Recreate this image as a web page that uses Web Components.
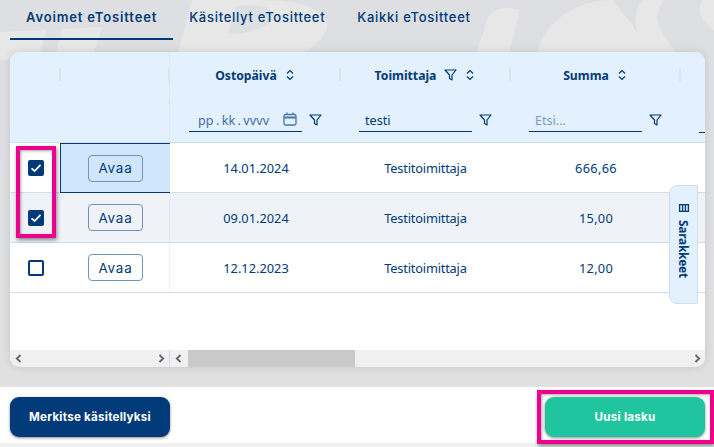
<!DOCTYPE html>
<html lang="fi">
<head>
<meta charset="utf-8">
<title>eTositteet</title>
<style>
  html, body { margin: 0; height: 100%; }
  body {
    width: 714px;
    height: 447px;
    overflow: hidden;
    position: relative;
    background: #f0f0f0;
    font-family: "Noto Sans", sans-serif;
    color: #003a78;
  }
</style>
</head>
<body>
<etosite-view>
  <etosite-tabs slot="tabs">
    <etosite-tab active>Avoimet eTositteet</etosite-tab>
    <etosite-tab>Käsitellyt eTositteet</etosite-tab>
    <etosite-tab>Kaikki eTositteet</etosite-tab>
  </etosite-tabs>
  <etosite-grid slot="grid"></etosite-grid>
  <etosite-button slot="actions">Merkitse käsitellyksi</etosite-button>
  <etosite-button slot="actions" kind="green">Uusi lasku</etosite-button>
</etosite-view>

<script>
const ICONS = {
  sort: `<svg width="10" height="12" viewBox="0 0 10 12" fill="none" stroke="currentColor" stroke-width="1.2"><path d="M2 4.5 5 1.5 8 4.5M2 7.5 5 10.5 8 7.5"/></svg>`,
  filter: `<svg width="13" height="12" viewBox="0 0 13 12" fill="none" stroke="currentColor" stroke-width="1.2" stroke-linejoin="round"><path d="M1 1h11L8 6v5L5.5 9.5V6z"/></svg>`,
  calendar: `<svg class="cal" width="14" height="14" viewBox="0 0 14 14" fill="none" stroke="#4a76a8" stroke-width="1.3"><rect x="1" y="2.5" width="12" height="10.5" rx="1.5"/><path d="M1 5.5h12" stroke-width="2"/><path d="M4 .5v2.5M10 .5v2.5"/></svg>`,
  columns: `<svg width="10" height="8" viewBox="0 0 10 8" fill="none" stroke="currentColor" stroke-width="1.3"><rect x=".65" y=".65" width="8.7" height="6.7"/><path d="M3.6.6v6.8M6.4.6v6.8"/></svg>`,
  left: `<svg width="7" height="9" viewBox="0 0 7 9" fill="none" stroke="#666" stroke-width="1.8"><path d="M5.5 1 1.8 4.5 5.5 8"/></svg>`,
  right: `<svg width="7" height="9" viewBox="0 0 7 9" fill="none" stroke="#666" stroke-width="1.8"><path d="M1.5 1 5.2 4.5 1.5 8"/></svg>`
};

class EtositeView extends HTMLElement {
  constructor() {
    super();
    this.attachShadow({ mode: 'open' });
    this.shadowRoot.innerHTML = `
      <style>
        :host { display: flex; flex-direction: column; width: 714px; height: 447px; position: relative; }
        .main { height: 387px; box-sizing: border-box; padding: 0 9px 0 10px; position: relative; overflow: hidden;
          background: linear-gradient(#dedfe3 0, #dedfe3 50px, #e0e0e0 100%); }
        .mark { position: absolute; left: 0; top: 0; }
        .content { position: relative; }
        .footer { height: 56px; background: #fff; box-sizing: border-box; padding: 10px 9px 6px 10px;
          display: flex; justify-content: space-between; }
        .rest { flex: 1; background: #f0f0f0; }
        .pink { position: absolute; border: 4px solid #ec008c; box-sizing: border-box;
          box-shadow: 1px 2px 4px rgba(0,0,0,.45), inset 1px 1px 3px rgba(0,0,0,.35); pointer-events: none; }
        .p1 { left: 16px; top: 146px; width: 40px; height: 92px; }
        .p2 { left: 537px; top: 390px; width: 177px; height: 54px; }
      </style>
      <div class="main">
        <svg class="mark" width="714" height="60" viewBox="0 0 714 60" fill="#e7e7e8">
          <path d="M0 32 46 30 38 60H0zM62 29 102 27 92 60H54z"/>
          <path d="M192 0H262C322 0 340 22 318 42L296 60H176zM236 6 228 34C256 34 276 24 272 12 270 6 254 4 236 6z"/>
          <path d="M474 60 488 18C492 8 508 6 520 10L508 60z"/>
          <path d="M536 60C540 24 574 0 612 0L632 24 650 60zM556 58C558 36 572 16 582 20 586 30 578 52 566 58z"/>
          <path d="M642 0H664C650 18 660 32 682 60H652C630 34 634 12 642 0zM702 0H714V30C702 22 696 10 702 0z"/>
        </svg>
        <div class="content">
          <slot name="tabs"></slot>
          <slot name="grid"></slot>
        </div>
      </div>
      <div class="footer"><slot name="actions"></slot></div>
      <div class="rest"></div>
      <div class="pink p1"></div>
      <div class="pink p2"></div>
    `;
  }
}

class EtositeTabs extends HTMLElement {
  constructor() {
    super();
    this.attachShadow({ mode: 'open' });
    this.shadowRoot.innerHTML = `
      <style>:host { display: flex; height: 40px; margin-bottom: 12px; }</style>
      <slot></slot>`;
  }
}

class EtositeTab extends HTMLElement {
  constructor() {
    super();
    this.attachShadow({ mode: 'open' });
    this.shadowRoot.innerHTML = `
      <style>
        :host { display: block; box-sizing: border-box; height: 40px; padding: 9px 16px 0;
          font: 500 13px/16px Inter, sans-serif; letter-spacing: .72px; color: #003a78; white-space: nowrap; }
        :host([active]) { border-bottom: 2px solid #003a78; font-weight: 600; letter-spacing: .85px; }
      </style>
      <slot></slot>`;
  }
}

class EtositeButton extends HTMLElement {
  constructor() {
    super();
    this.attachShadow({ mode: 'open' });
    this.shadowRoot.innerHTML = `
      <style>
        :host { display: flex; align-items: center; justify-content: center; width: 160px; height: 40px;
          border-radius: 9px; background: #003a78; color: #fff; font: 700 11.6px Inter, sans-serif;
          letter-spacing: .25px; box-shadow: 0 1px 3px rgba(0,0,0,.45); }
        :host([kind="green"]) { background: #20c5a0; }
      </style>
      <slot></slot>`;
  }
}

class EtositeHeadCell extends HTMLElement {
  constructor() {
    super();
    this.attachShadow({ mode: 'open' });
    this.shadowRoot.innerHTML = `
      <style>
        :host { display: flex; align-items: center; justify-content: center; gap: 8px; position: relative; height: 50px;
          font: 700 12.2px "Noto Sans", sans-serif; color: #003a78; white-space: nowrap; box-sizing: border-box; padding-bottom: 4px; }
        :host::after { content: ""; position: absolute; right: -1px; top: 16px; width: 2px; height: 13px; background: #d9e4ee; }
        svg { display: block; }
      </style>
      <slot></slot>`;
  }
}

class EtositeFilterCell extends HTMLElement {
  constructor() {
    super();
    this.attachShadow({ mode: 'open' });
    this.shadowRoot.innerHTML = `
      <style>
        :host { display: flex; align-items: flex-start; height: 40px; box-sizing: border-box; padding: 0 0 0 19px; }
        .field { width: 113px; height: 30px; box-sizing: border-box; border-bottom: 1px solid #003a78;
          display: flex; align-items: center; justify-content: space-between; padding: 7px 5px 0 6px;
          font: 400 12.6px "Noto Sans", sans-serif; color: #003a78; }
        .icon { margin: 7px 0 0 7px; color: #003a78; }
      </style>
      <div class="field"><slot></slot></div>
      <div class="icon">${ICONS.filter}</div>`;
  }
}

class EtositeCheck extends HTMLElement {
  constructor() {
    super();
    this.attachShadow({ mode: 'open' });
    this.shadowRoot.innerHTML = `
      <style>
        :host { display: block; width: 16px; height: 16px; box-sizing: border-box; border: 2px solid #003a78;
          border-radius: 2px; background: #fff; }
        :host([checked]) { background: #003a78; }
        svg { display: none; }
        :host([checked]) svg { display: block; margin: 0; }
      </style>
      <svg width="12" height="12" viewBox="0 0 12 12" fill="none" stroke="#fff" stroke-width="1.7"><path d="M1.5 6.3 4.6 9 10.5 2.8"/></svg>`;
  }
}

class EtositeOpen extends HTMLElement {
  constructor() {
    super();
    this.attachShadow({ mode: 'open' });
    this.shadowRoot.innerHTML = `
      <style>
        :host { display: flex; align-items: center; justify-content: center; box-sizing: border-box; width: 55px; height: 27px;
          border: 1px solid #6e94bf; border-radius: 4px; font: 400 13.4px Inter, sans-serif; letter-spacing: .85px; color: #003a78; }
      </style>
      <slot></slot>`;
  }
}

class EtositeRow extends HTMLElement {
  constructor() {
    super();
    this.attachShadow({ mode: 'open' });
  }
  connectedCallback() {
    const checked = this.hasAttribute('checked') ? 'checked' : '';
    this.shadowRoot.innerHTML = `
      <style>
        :host { display: grid; grid-template-columns: 50px 110px 170px 170px 170px 25px; height: 50px; box-sizing: border-box;
          border-bottom: 1px solid #cfdeee; background: #fff; font: 400 12.8px "Noto Sans", sans-serif; color: #003a78; }
        :host([alt]) { background: #eff3f8; }
        .c { display: flex; align-items: center; justify-content: center; box-sizing: border-box; }
        .check { padding-left: 2px; }
        .open { padding-left: 2px; }
        .open.focus { background: #cfe6fb; border: 1px solid #003a78; border-right: 0; margin-bottom: -1px; padding-left: 0; }
        .pin { border-right: 1px dotted #d6e2ee; }
        .date { padding-left: 2px; }
        .supplier { letter-spacing: -.2px; padding-left: 1px; }
        .sum { padding-left: 2px; letter-spacing: .3px; }
      </style>
      <div class="c check"><etosite-check ${checked}></etosite-check></div>
      <div class="c open pin ${this.hasAttribute('focus') ? 'focus' : ''}"><etosite-open>Avaa</etosite-open></div>
      <div class="c date">${this.getAttribute('date')}</div>
      <div class="c supplier">${this.getAttribute('supplier')}</div>
      <div class="c sum">${this.getAttribute('sum')}</div>
      <div class="c"></div>`;
  }
}

class EtositeScrollbar extends HTMLElement {
  constructor() {
    super();
    this.attachShadow({ mode: 'open' });
    this.shadowRoot.innerHTML = `
      <style>
        :host { display: flex; height: 17px; background: #f0f0f0; }
        .pinned { width: 160px; box-sizing: border-box; border-right: 1px solid #cfdeee; display: flex; align-items: center;
          justify-content: space-between; padding: 0 4px 0 5px; }
        .track { flex: 1; display: flex; align-items: center; padding: 0 4px 0 5px; }
        .thumb { width: 167px; height: 17px; background: #c9c9c9; margin: 0 auto 0 6px; }
        svg { display: block; }
      </style>
      <div class="pinned">${ICONS.left}${ICONS.right}</div>
      <div class="track">${ICONS.left}<div class="thumb"></div>${ICONS.right}</div>`;
  }
}

class EtositeSideTab extends HTMLElement {
  constructor() {
    super();
    this.attachShadow({ mode: 'open' });
    this.shadowRoot.innerHTML = `
      <style>
        :host { position: absolute; right: 7px; top: 133px; width: 29px; height: 119px; box-sizing: border-box;
          background: #e3f0fd; border: 1px solid #cfdeee; border-radius: 8px 0 0 8px;
          display: flex; flex-direction: column; align-items: center; padding-top: 18px; gap: 8px; color: #003a78; }
        span { writing-mode: vertical-rl; font: 700 12px "Noto Sans", sans-serif; letter-spacing: -.3px; }
      </style>
      ${ICONS.columns}<span><slot></slot></span>`;
  }
}

class EtositeGrid extends HTMLElement {
  constructor() {
    super();
    this.attachShadow({ mode: 'open' });
    this.shadowRoot.innerHTML = `
      <style>
        :host { display: flex; flex-direction: column; position: relative; width: 695px; height: 315px; background: #fff;
          border-radius: 10px; overflow: hidden; box-shadow: 0 0 8px rgba(0,0,0,.12); }
        .head { display: grid; grid-template-columns: 50px 110px 170px 170px 170px 25px; background: #e3f0fd;
          border-bottom: 1px solid #cfdeee; }
        .rows { flex: 1; }
        .pin { border-right: 1px dotted #d6e2ee; }
        .stub { grid-column: span 2; }
        .date { color: #3f6ea8; letter-spacing: .05px; word-spacing: -1px; margin-left: 3px; }
        .ph { color: #7d9cc0; }
        svg { display: block; }
        .cal { margin-top: -3px; }
      </style>
      <div class="head">
        <etosite-head-cell></etosite-head-cell>
        <etosite-head-cell class="pin"></etosite-head-cell>
        <etosite-head-cell>Ostopäivä ${ICONS.sort}</etosite-head-cell>
        <etosite-head-cell>Toimittaja ${ICONS.filter} ${ICONS.sort}</etosite-head-cell>
        <etosite-head-cell>Summa ${ICONS.sort}</etosite-head-cell>
        <div></div>
        <div class="stub pin"></div>
        <etosite-filter-cell><span class="date">pp . kk . vvvv</span>${ICONS.calendar}</etosite-filter-cell>
        <etosite-filter-cell>testi</etosite-filter-cell>
        <etosite-filter-cell><span class="ph">Etsi...</span></etosite-filter-cell>
        <div style="padding-left:19px"><div style="height:30px;border-bottom:1px solid #003a78"></div></div>
      </div>
      <div class="rows">
        <etosite-row checked focus date="14.01.2024" supplier="Testitoimittaja" sum="666,66"></etosite-row>
        <etosite-row checked alt date="09.01.2024" supplier="Testitoimittaja" sum="15,00"></etosite-row>
        <etosite-row date="12.12.2023" supplier="Testitoimittaja" sum="12,00"></etosite-row>
      </div>
      <etosite-scrollbar></etosite-scrollbar>
      <etosite-side-tab>Sarakkeet</etosite-side-tab>`;
  }
}

customElements.define('etosite-view', EtositeView);
customElements.define('etosite-tabs', EtositeTabs);
customElements.define('etosite-tab', EtositeTab);
customElements.define('etosite-button', EtositeButton);
customElements.define('etosite-head-cell', EtositeHeadCell);
customElements.define('etosite-filter-cell', EtositeFilterCell);
customElements.define('etosite-check', EtositeCheck);
customElements.define('etosite-open', EtositeOpen);
customElements.define('etosite-row', EtositeRow);
customElements.define('etosite-scrollbar', EtositeScrollbar);
customElements.define('etosite-side-tab', EtositeSideTab);
customElements.define('etosite-grid', EtositeGrid);
</script>
</body>
</html>
